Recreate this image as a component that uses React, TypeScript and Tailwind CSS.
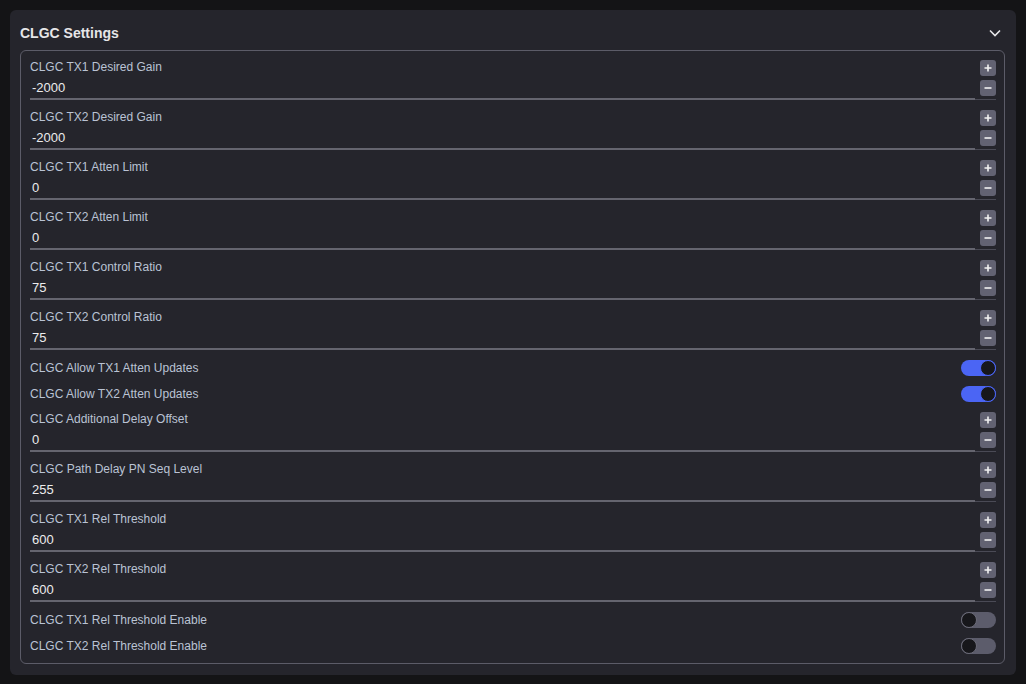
import { ReactNode } from "react";

type Setting =
  | { kind: "number"; label: string; value: string }
  | { kind: "toggle"; label: string; on: boolean };

const settings: Setting[] = [
  { kind: "number", label: "CLGC TX1 Desired Gain", value: "-2000" },
  { kind: "number", label: "CLGC TX2 Desired Gain", value: "-2000" },
  { kind: "number", label: "CLGC TX1 Atten Limit", value: "0" },
  { kind: "number", label: "CLGC TX2 Atten Limit", value: "0" },
  { kind: "number", label: "CLGC TX1 Control Ratio", value: "75" },
  { kind: "number", label: "CLGC TX2 Control Ratio", value: "75" },
  { kind: "toggle", label: "CLGC Allow TX1 Atten Updates", on: true },
  { kind: "toggle", label: "CLGC Allow TX2 Atten Updates", on: true },
  { kind: "number", label: "CLGC Additional Delay Offset", value: "0" },
  { kind: "number", label: "CLGC Path Delay PN Seq Level", value: "255" },
  { kind: "number", label: "CLGC TX1 Rel Threshold", value: "600" },
  { kind: "number", label: "CLGC TX2 Rel Threshold", value: "600" },
  { kind: "toggle", label: "CLGC TX1 Rel Threshold Enable", on: false },
  { kind: "toggle", label: "CLGC TX2 Rel Threshold Enable", on: false },
];

function StepButton({ children }: { children: ReactNode }) {
  return (
    <button className="flex h-4 w-4 items-center justify-center rounded-[3px] bg-[#626272] text-[#f2f2f2]">
      {children}
    </button>
  );
}

function NumberRow({ label, value }: { label: string; value: string }) {
  return (
    <div className="mb-[6px] flex h-[44px]">
      <div className="flex flex-1 flex-col">
        <div className="pt-[4px] text-[12px] leading-[14px] text-[#bac3d4]">{label}</div>
        <div className="flex-1 border-b-2 border-[#65656f] pl-[2px] pt-[6px] text-[13px] leading-[16px] text-[#ececec]">
          {value}
        </div>
      </div>
      <div className="flex w-[21px] flex-col items-end gap-1 border-b border-[#4a4a55] pt-[4px]">
        <StepButton>
          <svg width="10" height="10" viewBox="0 0 10 10">
            <path d="M5 1.5v7M1.5 5h7" stroke="currentColor" strokeWidth="1.6" />
          </svg>
        </StepButton>
        <StepButton>
          <svg width="10" height="10" viewBox="0 0 10 10">
            <path d="M1.5 5h7" stroke="currentColor" strokeWidth="1.6" />
          </svg>
        </StepButton>
      </div>
    </div>
  );
}

function ToggleRow({ label, on }: { label: string; on: boolean }) {
  return (
    <div className="flex h-[26px] items-center justify-between pb-[2px]">
      <span className="text-[12px] leading-[14px] text-[#bac3d4]">{label}</span>
      <div
        className={
          on
            ? "flex h-4 w-[35px] justify-end rounded-full bg-[#4b65f4]"
            : "flex h-4 w-[35px] justify-start rounded-full bg-[#5c5c6b]"
        }
      >
        <div
          className={
            on
              ? "h-4 w-4 rounded-full border border-[#4b65f4] bg-[#17171b]"
              : "h-4 w-4 rounded-full border border-[#6b6b78] bg-[#17171b]"
          }
        />
      </div>
    </div>
  );
}

export default function App() {
  return (
    <div className="h-[684px] w-full bg-[#141416] p-[10px] font-['Liberation_Sans',Arial,sans-serif]">
      <div className="rounded-md bg-[#25252c] pb-[11px] pl-[10px] pr-[11px] pt-[10px]">
        <div className="flex h-[26px] items-center justify-between">
          <h2 className="text-[14px] font-bold text-[#e6e6e8]">CLGC Settings</h2>
          <svg width="14" height="14" viewBox="0 0 14 14" className="mr-[3px] text-[#e6e6e8]">
            <path d="M2 4.5l5 5 5-5" fill="none" stroke="currentColor" strokeWidth="1.6" />
          </svg>
        </div>
        <div className="mt-1 rounded-md border border-[#5c5c68] pb-[3px] pl-[9px] pr-[8px] pt-[5px]">
          {settings.map((s) =>
            s.kind === "number" ? (
              <NumberRow key={s.label} label={s.label} value={s.value} />
            ) : (
              <ToggleRow key={s.label} label={s.label} on={s.on} />
            )
          )}
        </div>
      </div>
    </div>
  );
}
